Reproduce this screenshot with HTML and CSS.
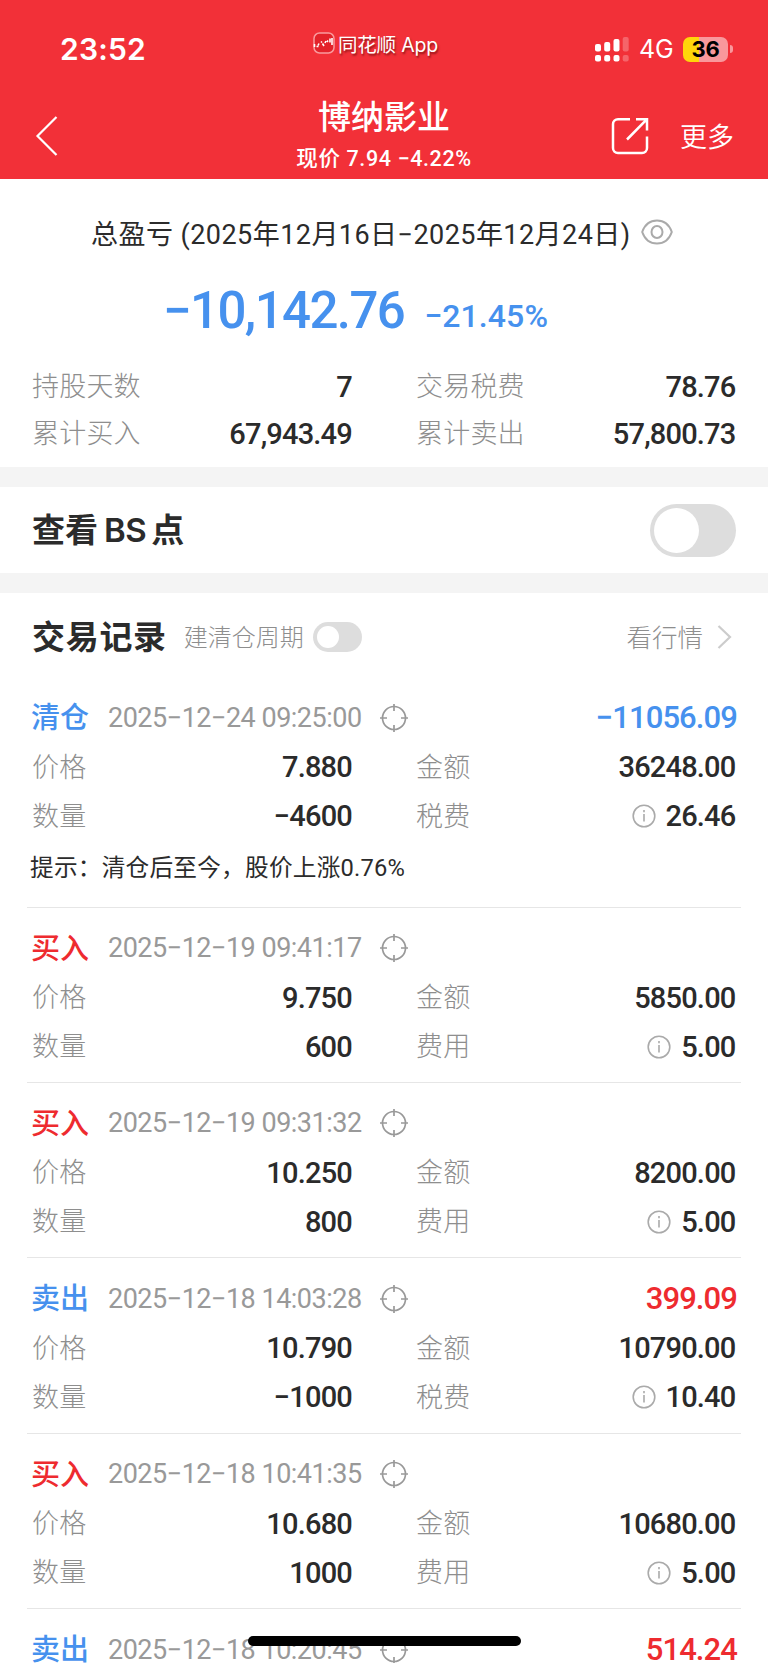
FILE: index.html
```html
<!DOCTYPE html>
<html lang="zh-CN">
<head>
    <meta charset="UTF-8">
    <meta name="viewport" content="width=device-width, initial-scale=1.0">
    <title>博纳影业 - 交易记录</title>
    <link rel="stylesheet" href="styles.css">
</head>
<body>
    <header>
        <div class="status-bar">
            <span class="time">23:52</span>
            <div class="app-name">
                <svg width="22" height="22" viewBox="0 0 22 22" fill="none">
                    <rect x="1" y="1" width="20" height="20" rx="5.5" fill="#e3222a" stroke="#f99a9d" stroke-width="1.5"/>
                    <path d="M1.5 12v3M3.5 14.5h2M6 11.5l-1 2M8 10.5l1-1M9.5 11.5l1.5 2.5M12 11l1-2M14 10l1-1.5M17 6.5v4M19 6v7" stroke="#fff" stroke-width="1.6"/>
                </svg>
                <span>同花顺 App</span>
            </div>
            <div class="status-right">
                <svg class="signal" width="35" height="26" viewBox="0 0 35 26" fill="#fff">
                    <rect x="0" y="8" width="6" height="7.5" rx="2"/>
                    <rect x="9.2" y="6" width="6" height="9.5" rx="2"/>
                    <rect x="18.5" y="3" width="6" height="12.5" rx="2"/>
                    <rect x="27.7" y="1" width="6" height="14.5" rx="2" opacity=".25"/>
                    <rect x="0" y="19" width="6" height="6.5" rx="2"/>
                    <rect x="9.2" y="19" width="6" height="6.5" rx="2"/>
                    <rect x="18.5" y="19" width="6" height="6.5" rx="2"/>
                    <rect x="27.7" y="19" width="6" height="6.5" rx="2" opacity=".25"/>
                </svg>
                <span class="network">4G</span>
                <span class="battery">36</span>
                <span class="battery-tip"></span>
            </div>
        </div>
        <div class="nav-bar">
            <svg class="back" width="24" height="42" viewBox="0 0 24 42" fill="none" stroke="#fff" stroke-width="2.2">
                <path d="M21.5 2L2.5 21l19 19"/>
            </svg>
            <div class="stock">
                <h1>博纳影业</h1>
                <p>现价 <span>7.94 −4.22%</span></p>
            </div>
            <svg class="share" width="38" height="38" viewBox="0 0 38 38" fill="none" stroke="#fff" stroke-width="2.5">
                <path d="M19 2.2H7a5 5 0 0 0-5 5V31a5 5 0 0 0 5 5h24a5 5 0 0 0 5-5V19.5"/>
                <path d="M25 2.2h11V13.5M36 2.2L16 22.5"/>
            </svg>
            <span class="more">更多</span>
        </div>
    </header>

    <section class="summary">
        <div class="period">
            <span>总盈亏 (2025年12月16日−2025年12月24日)</span>
            <svg width="32" height="26" viewBox="0 0 32 26" fill="none" stroke="#aaa" stroke-width="2">
                <path d="M1.2 13C4 5 10 1.5 16 1.5S28 5 30.8 13C28 21 22 24.5 16 24.5S4 21 1.2 13z"/>
                <ellipse cx="16" cy="13" rx="5.5" ry="6"/>
            </svg>
        </div>
        <div class="profit">
            <span class="amount">−10,142.76</span>
            <span class="percent">−21.45%</span>
        </div>
        <div class="grid">
            <span class="label">持股天数</span><span class="value">7</span>
            <span class="label">交易税费</span><span class="value">78.76</span>
            <span class="label">累计买入</span><span class="value">67,943.49</span>
            <span class="label">累计卖出</span><span class="value">57,800.73</span>
        </div>
    </section>

    <section class="bs">
        <h2>查看<span>BS</span>点</h2>
        <div class="switch"></div>
    </section>

    <section class="records">
        <div class="records-head">
            <h2>交易记录</h2>
            <span class="cycle">建清仓周期</span>
            <div class="switch small"></div>
            <span class="quote">看行情</span>
            <svg width="15" height="24" viewBox="0 0 15 24" fill="none" stroke="#ccc" stroke-width="2.2">
                <path d="M1.5 1l11.5 11L1.5 23"/>
            </svg>
        </div>
        <div id="record-list"></div>
    </section>

    <div class="home-indicator"></div>

    <script>
        const records = [
            { type: '清仓', color: 'blue', time: '2025−12−24 09:25:00', profit: '−11056.09', price: '7.880', amount: '36248.00', count: '−4600', feeName: '税费', fee: '26.46', tip: '提示：清仓后至今，股价上涨0.76%' },
            { type: '买入', color: 'red', time: '2025−12−19 09:41:17', price: '9.750', amount: '5850.00', count: '600', feeName: '费用', fee: '5.00' },
            { type: '买入', color: 'red', time: '2025−12−19 09:31:32', price: '10.250', amount: '8200.00', count: '800', feeName: '费用', fee: '5.00' },
            { type: '卖出', color: 'blue', time: '2025−12−18 14:03:28', profit: '399.09', price: '10.790', amount: '10790.00', count: '−1000', feeName: '税费', fee: '10.40' },
            { type: '买入', color: 'red', time: '2025−12−18 10:41:35', price: '10.680', amount: '10680.00', count: '1000', feeName: '费用', fee: '5.00' },
            { type: '卖出', color: 'blue', time: '2025−12−18 10:20:45', profit: '514.24' }
        ];

        const targetIcon = `<svg width="28" height="28" viewBox="0 0 28 28" fill="none" stroke="#999" stroke-width="1.7">
            <circle cx="14" cy="14" r="11.5"/>
            <path d="M14 0v7M14 21v7M0 14h7M21 14h7"/>
        </svg>`;

        const infoIcon = `<svg width="24" height="24" viewBox="0 0 24 24" fill="none" stroke="#aaa" stroke-width="1.6">
            <circle cx="12" cy="12" r="10.8"/>
            <path d="M12 10v7.5M12 6v2.2"/>
        </svg>`;

        function renderRecord(item) {
            let html = `<div class="record-title">
                <span class="type ${item.color}">${item.type}</span>
                <span class="date">${item.time}</span>${targetIcon}`;
            if (item.profit) {
                const color = item.profit.startsWith('−') ? 'blue' : 'red';
                html += `<span class="gain ${color}">${item.profit}</span>`;
            }
            html += '</div>';
            if (item.price) {
                html += `<div class="grid">
                    <span class="label">价格</span><span class="value">${item.price}</span>
                    <span class="label">金额</span><span class="value">${item.amount}</span>
                    <span class="label">数量</span><span class="value">${item.count}</span>
                    <span class="label">${item.feeName}</span><span class="value">${infoIcon}${item.fee}</span>
                </div>`;
            }
            if (item.tip) {
                html += `<p class="tip">${item.tip}</p>`;
            }
            return `<div class="record">${html}</div>`;
        }

        document.getElementById('record-list').innerHTML = records.map(renderRecord).join('');
    </script>
</body>
</html>
```
FILE: styles.css
```css
* {
    margin: 0;
    padding: 0;
    box-sizing: border-box;
}

body {
    font-family: Roboto, "Noto Sans CJK SC", sans-serif;
    background-color: #ffffff;
    color: #2b2b2b;
    width: 768px;
    height: 1663px;
    overflow: hidden;
    position: relative;
}

header {
    height: 179px;
    background-color: #f23038;
    color: #ffffff;
}

.status-bar {
    display: grid;
    grid-template-columns: 313px 1fr 173px;
    height: 98px;
    align-items: center;
    font-family: Inter, "Noto Sans CJK SC", sans-serif;
}

.time {
    padding-left: 60px;
    font-size: 30px;
    font-weight: 600;
    letter-spacing: 0.2px;
}

.app-name {
    display: flex;
    align-items: center;
    gap: 3px;
    height: 30px;
    margin-bottom: 12px;
    font-size: 19.5px;
    letter-spacing: -0.2px;
    white-space: nowrap;
    text-shadow: 1px 2px 2px rgba(80, 0, 0, 0.6);
}

.status-right {
    display: flex;
    align-items: center;
}

.network {
    margin-left: 9px;
    width: 44px;
    font-size: 25px;
    letter-spacing: -0.2px;
}

.battery {
    width: 45px;
    height: 25px;
    line-height: 25px;
    border-radius: 7px;
    background: linear-gradient(to right, #ffd60a 35%, #f9989c 35%);
    color: #000000;
    font-size: 22px;
    font-weight: 700;
    letter-spacing: -0.3px;
    text-align: center;
}

.battery-tip {
    margin-left: 2px;
    width: 3px;
    height: 8px;
    border-radius: 0 3px 3px 0;
    background-color: #f9989c;
}

.nav-bar {
    display: grid;
    grid-template-columns: 224px 320px 68px 68px 1fr;
    height: 81px;
    grid-template-areas: "back stock . share more";
}

.back {
    grid-area: back;
    margin: 17px 0 0 35px;
}

.stock {
    grid-area: stock;
    text-align: center;
}

.stock h1 {
    font-size: 33px;
    font-weight: 500;
    line-height: 40px;
}

.stock p {
    font-size: 21.5px;
    font-weight: 500;
    line-height: 28px;
    margin-top: 7px;
    letter-spacing: 0.6px;
}

.share {
    grid-area: share;
    margin: 19px 0 0 -1px;
}

.more {
    grid-area: more;
    font-size: 27px;
    line-height: 40px;
    margin-top: 20px;
    font-weight: 350;
}

.summary {
    height: 288px;
    padding-top: 33px;
}

.period {
    display: flex;
    align-items: center;
    height: 40px;
    padding-left: 91px;
    gap: 10px;
    font-size: 27px;
    letter-spacing: 0.45px;
    white-space: nowrap;
}

.profit {
    display: flex;
    height: 60px;
    margin: 29px 0 22px;
    padding-left: 163px;
    gap: 20px;
    color: #4691ee;
    font-weight: 500;
}

.amount {
    font-size: 51px;
    line-height: 60px;
    letter-spacing: -1.6px;
}

.percent {
    font-size: 32px;
    line-height: 70px;
    letter-spacing: 0.1px;
}

.grid {
    display: grid;
    grid-template-columns: 140px 180px 64px 140px 179.5px;
    grid-auto-rows: 49px;
    align-items: center;
    padding-left: 32px;
}

.grid .label:nth-child(4n + 3) {
    grid-column: 4;
}

.grid .value:nth-child(4n) {
    grid-column: 5;
}

.summary .grid {
    grid-template-rows: 47px 47px;
}

.label {
    color: #8e8e8e;
    font-size: 27px;
    font-weight: 300;
    line-height: 40px;
    letter-spacing: 0.2px;
    padding-top: 1px;
}

.value {
    display: flex;
    justify-content: flex-end;
    align-items: center;
    font-size: 29px;
    font-weight: 500;
    line-height: 40px;
    letter-spacing: -0.8px;
}

.value svg {
    margin-right: 10px;
}

.bs {
    display: flex;
    align-items: center;
    justify-content: space-between;
    height: 126px;
    padding: 0 32px;
    border-top: 20px solid #f4f4f4;
    border-bottom: 20px solid #f4f4f4;
}

h2 {
    font-size: 33px;
    font-weight: 700;
    line-height: 44px;
}

.bs h2 span {
    margin: 0 5px 0 6px;
    font-family: Inter, sans-serif;
    font-weight: 600;
    letter-spacing: -0.5px;
}

.switch {
    width: 86px;
    height: 53px;
    padding: 4px;
    border-radius: 27px;
    background-color: #dddddd;
}

.switch::before {
    content: "";
    display: block;
    width: 45px;
    height: 45px;
    border-radius: 50%;
    background-color: #ffffff;
}

.switch.small {
    width: 49px;
    height: 30px;
}

.switch.small::before {
    width: 22px;
    height: 22px;
}

.records-head {
    display: flex;
    align-items: center;
    height: 88px;
    padding: 0 36px 0 32px;
}

.records-head h2 {
    letter-spacing: 0.7px;
    padding-top: 1px;
}

.cycle {
    margin: 0 9px 3px 17px;
    color: #8e8e8e;
    font-size: 24px;
    font-weight: 300;
}

.quote {
    margin: 0 14px 3px auto;
    color: #8e8e8e;
    font-size: 25.5px;
    font-weight: 300;
}

.record {
    position: relative;
    height: 175.4px;
    padding-top: 15.5px;
}

.record:first-child {
    height: 226.5px;
    padding-top: 11.5px;
}

.record:last-child {
    height: 55px;
}

.record::after {
    content: "";
    position: absolute;
    left: 27px;
    right: 27px;
    bottom: 0;
    height: 1px;
    background-color: #e6e6e6;
}

.record:last-child::after {
    display: none;
}

.record-title {
    display: flex;
    align-items: center;
    height: 50px;
    padding: 0 31px 0 32px;
}

.type {
    width: 77px;
    margin: 1px 0 0 -1px;
    font-size: 29px;
    font-weight: 500;
    line-height: 40px;
}

.date {
    width: 272px;
    color: #999999;
    font-size: 27px;
    line-height: 32px;
    letter-spacing: -0.5px;
    white-space: nowrap;
}

.gain {
    margin-left: auto;
    font-size: 31px;
    font-weight: 500;
    line-height: 30px;
    letter-spacing: -0.9px;
}

.blue {
    color: #4691ee;
}

.red {
    color: #ee2b2f;
}

.tip {
    padding-left: 30px;
    font-size: 23.7px;
    line-height: 40px;
    letter-spacing: 0.2px;
    margin-top: 7px;
}

.home-indicator {
    position: absolute;
    left: 248px;
    top: 1636px;
    width: 273px;
    height: 10px;
    border-radius: 5px;
    background-color: #000000;
}
```
